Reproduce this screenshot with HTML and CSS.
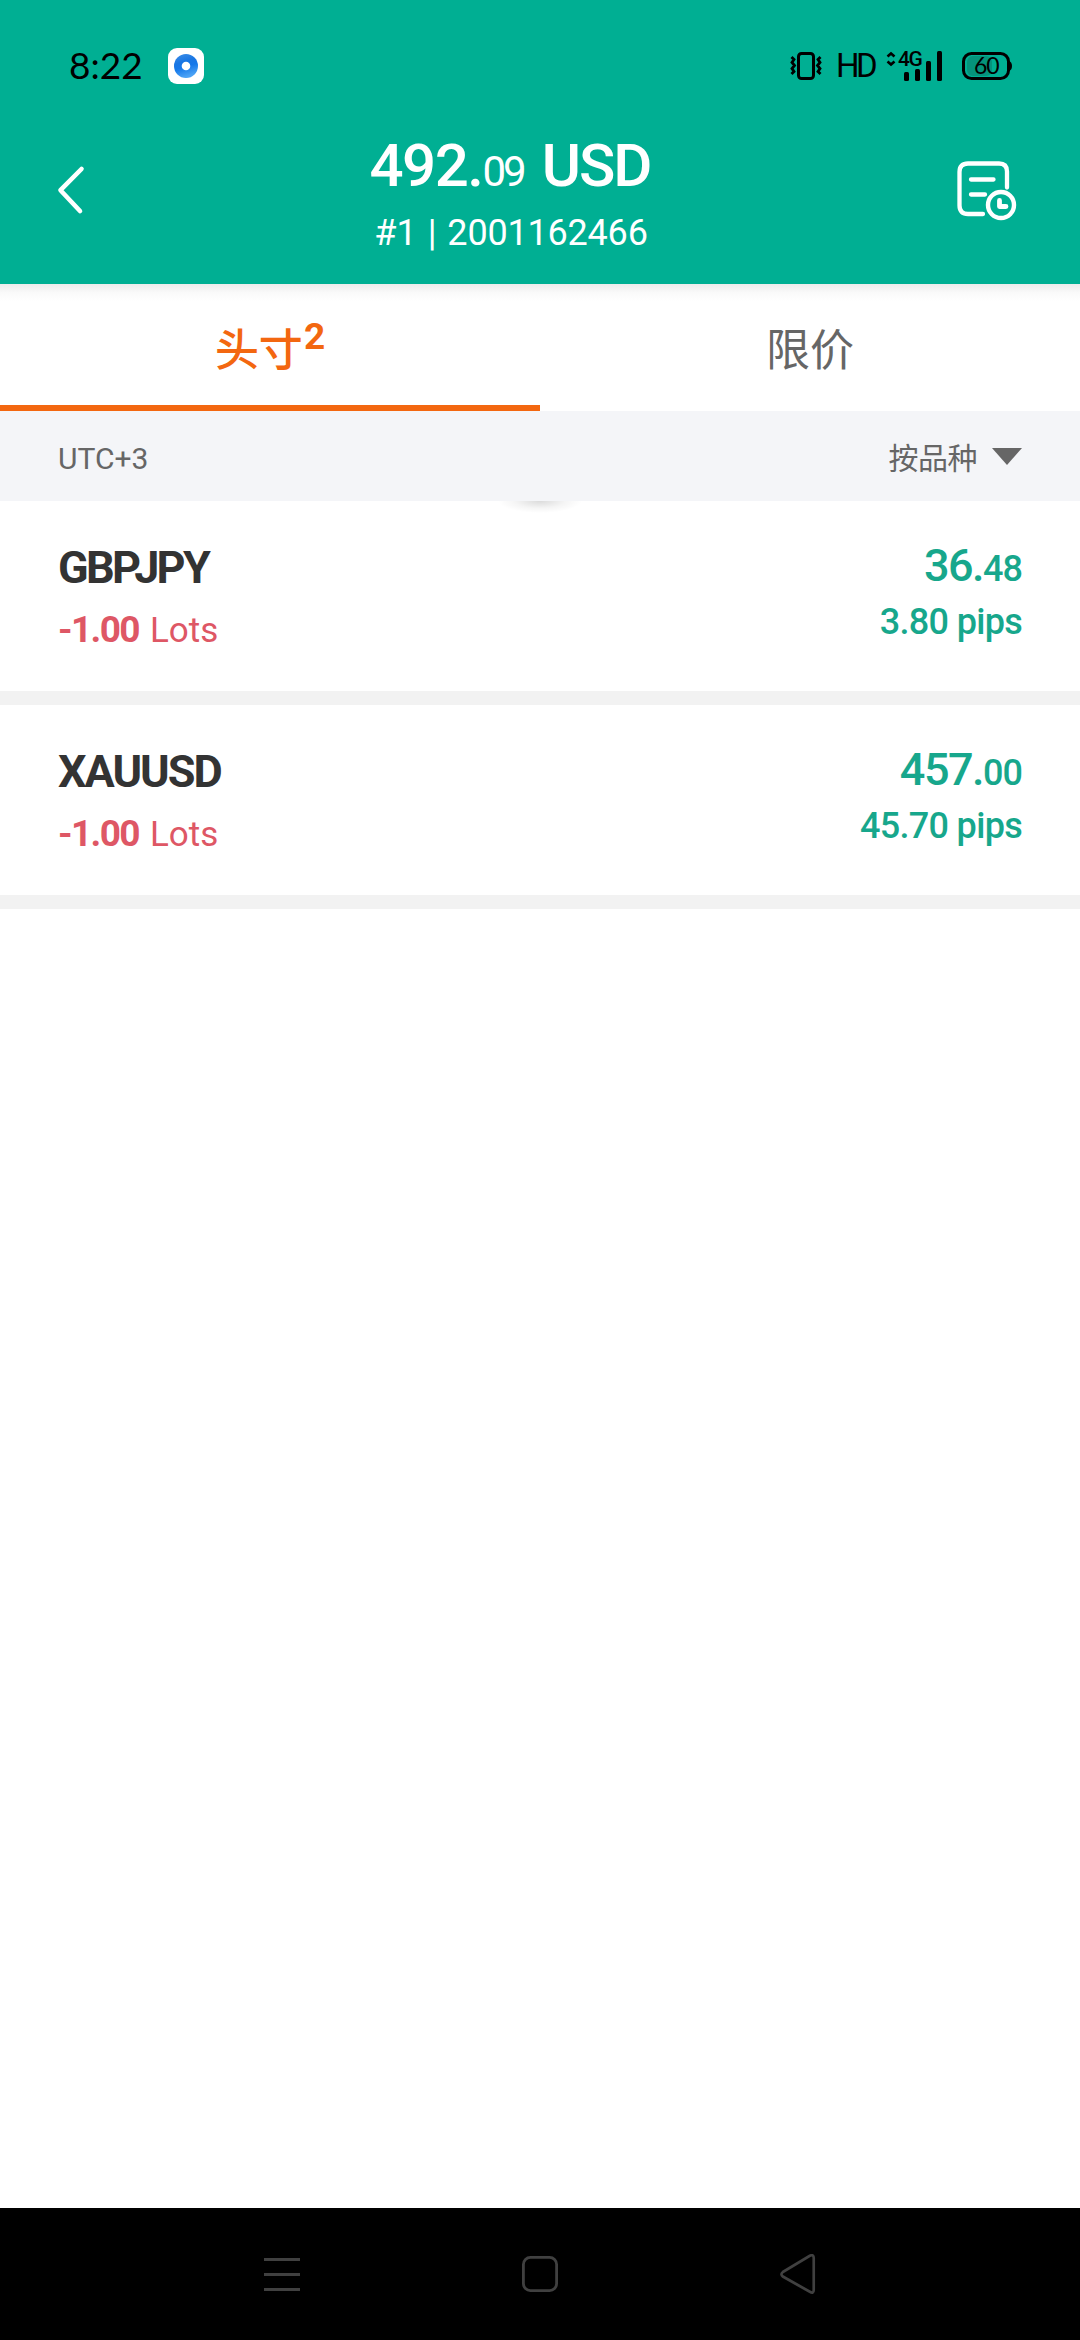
FILE: index.html
```html
<!DOCTYPE html>
<html lang="zh-CN">
<head>
<meta charset="utf-8">
<title>头寸</title>
<link rel="stylesheet" href="styles.css">
</head>
<body>
<div class="screen">
  <header class="header">
    <div class="status">
      <div class="status-left">
        <span class="time">8:22</span>
        <svg class="app-icon" width="36" height="36" viewBox="0 0 36 36">
          <defs><linearGradient id="ring" x1="0" y1="0" x2="0.3" y2="1"><stop offset="0" stop-color="#3f8fe6"/><stop offset=".4" stop-color="#1976e3"/><stop offset=".62" stop-color="#1478ea"/><stop offset="1" stop-color="#4ba2f5"/></linearGradient></defs>
          <rect width="36" height="36" rx="9" fill="#fff"/>
          <circle cx="18" cy="18" r="12" fill="url(#ring)"/>
          <circle cx="18" cy="18" r="4.3" fill="#fff"/>
        </svg>
      </div>
      <div class="status-right">
        <svg width="32" height="30" viewBox="0 0 32 30" fill="none" stroke="#000">
          <rect x="8.5" y="2.5" width="15" height="25" rx="3" stroke-width="3"/>
          <path d="M1.5 6l2.5 2.500L2 11.500l2.500 3-2.500 3 2 3L1.500 23M30.500 6L28 8.500l2 3-2.500 3 2.500 3-2 3 2.500 2.500" stroke-width="2.800"/>
        </svg>
        <span class="hd">HD</span>
        <div class="signal">
          <svg width="57" height="32" viewBox="0 0 57 32">
            <path d="M1.500 6.500L5 3.500l3.500 3M1.500 11.500L5 14.500l3.500-3" fill="none" stroke="#000" stroke-width="2.600"/>
            <rect x="18" y="22" width="5" height="9" rx="1.500"/>
            <rect x="29" y="19" width="5" height="12" rx="1.500"/>
            <rect x="40" y="11" width="5" height="20" rx="1.500"/>
            <rect x="51" y="1" width="5" height="30" rx="1.500"/>
          </svg>
          <span class="net">4G</span>
        </div>
        <div class="battery">
          <svg width="50" height="30" viewBox="0 0 50 30">
            <rect x="5" y="5" width="25" height="20" rx="6" fill="#05937b"/>
            <rect x="1.500" y="2.500" width="45" height="25" rx="8" fill="none" stroke="#000" stroke-width="3"/>
            <path d="M47 10q3 1 3 5t-3 5z"/>
          </svg>
          <span class="level">60</span>
        </div>
      </div>
    </div>
    <div class="bar">
      <svg class="back" width="28" height="50" viewBox="0 0 28 50"><path d="M24.500 4L3.500 25.200 23 46" fill="none" stroke="#fff" stroke-width="4.600" stroke-linecap="round" stroke-linejoin="round"/></svg>
      <div class="title">
        <div class="balance">492.<span class="cents">09</span><span class="currency">USD</span></div>
        <div class="account">#1 | <span>2001162466</span></div>
      </div>
      <svg class="history" width="60" height="60" viewBox="0 0 60 60" fill="none" stroke="#fff" stroke-width="4.300" stroke-linecap="round" stroke-linejoin="round">
        <path d="M26 53H11q-8.500 0-8.500-8.500V11Q2.500 2.500 11 2.500H42Q50 2.500 50 10.500V26.500M14 18.500H36.500M14 33.500H28"/>
        <circle cx="44" cy="44" r="13" stroke-width="4.400"/>
        <path d="M42.500 39.500V45.500H49" stroke-width="4.800"/>
      </svg>
    </div>
  </header>

  <nav class="tabs">
    <div class="tab active"><span>头寸</span><span class="count">2</span></div>
    <div class="tab"><span>限价</span></div>
  </nav>

  <div class="filter">
    <span class="zone">UTC+3</span>
    <div class="sort"><span>按品种</span><svg width="30" height="17" viewBox="0 0 30 17"><path d="M0 0H30L15 17z" fill="#666"/></svg></div>
  </div>

  <main class="list">
    <div class="pull"></div>
    <section class="row">
      <div class="left">
        <div class="symbol jpy">GBPJPY</div>
        <div class="lots"><b>-1.00</b><span>Lots</span></div>
      </div>
      <div class="right">
        <div class="profit">36.<span>48</span></div>
        <div class="pips">3.80 pips</div>
      </div>
    </section>
    <section class="row">
      <div class="left">
        <div class="symbol xau">XAUUSD</div>
        <div class="lots"><b>-1.00</b><span>Lots</span></div>
      </div>
      <div class="right">
        <div class="profit">457.<span>00</span></div>
        <div class="pips">45.70 pips</div>
      </div>
    </section>
  </main>

  <footer class="nav">
    <svg width="36" height="40" viewBox="0 0 36 40" stroke="#404040" stroke-width="3"><path d="M0 5.500H36M0 20.500H36M0 35.500H36"/></svg>
    <svg width="36" height="40" viewBox="0 0 36 40" fill="none" stroke="#404040" stroke-width="2.800"><rect x="1.400" y="3.400" width="33.200" height="33.200" rx="7"/></svg>
    <svg width="36" height="40" viewBox="0 0 38 40" fill="none" stroke="#404040" stroke-width="2.800" preserveAspectRatio="none"><path d="M3 18L31.500 1.800Q35.600 0 35.600 4V36Q35.600 40 31.500 37.800L3 22.500Q0 20.300 3 18z"/></svg>
  </footer>
</div>
</body>
</html>
```
FILE: styles.css
```css
* { box-sizing: border-box; }
body { margin: 0; background: #fff; font-family: Roboto, "Noto Sans CJK SC", sans-serif; }
svg { display: block; flex: none; }

.screen { width: 1080px; height: 2340px; display: flex; flex-direction: column; overflow: hidden; }

.header { height: 284px; background: #00af93; }
.status { height: 132px; padding: 0 68px 0 69px; display: flex; justify-content: space-between; align-items: center; color: #000; }
.status-left, .status-right { display: flex; align-items: center; }
.time { width: 99px; margin-top: -2px; font: 400 37px/44px Lato, sans-serif; letter-spacing: 0; white-space: nowrap; }
.hd { width: 50px; margin-left: 14px; font-size: 33px; line-height: 40px; letter-spacing: -3.500px; }
.signal { position: relative; width: 57px; margin-right: 19px; }
.net { position: absolute; left: 12px; top: -3px; font-size: 21px; line-height: 24px; font-weight: 500; letter-spacing: -1.500px; }
.battery { position: relative; }
.level { position: absolute; left: 12px; top: 1px; font: 400 23px/26px Lato, sans-serif; letter-spacing: -1px; }

.bar { height: 152px; display: grid; grid-template-columns: 200px 620px 1fr; color: #fff; }
.back { margin: 33px 0 0 57px; }
.history { margin: 29px 0 0 137px; }
.title { text-align: center; white-space: nowrap; }
.balance { margin-top: -1px; font-size: 60px; line-height: 70px; font-weight: 500; letter-spacing: -1.500px; }
.cents { font-size: 42px; line-height: 1; font-weight: 400; letter-spacing: -3px; }
.currency { margin-left: 18px; letter-spacing: -2px; }
.account { margin-top: 10px; padding-left: 2px; font-size: 36px; line-height: 44px; word-spacing: 2px; }
.account span { letter-spacing: -.2px; }

.tabs { height: 127px; display: flex; background: linear-gradient(#ececec, #fafafa 9px, #fff 18px); }
.tab { flex: 1; display: flex; justify-content: center; font-size: 44px; line-height: 127px; color: #666; }
.tab.active { color: #f36710; font-weight: 500; border-bottom: 6px solid #f36710; }
.tab span { height: 118px; margin-top: 4px; }
.tab .count { margin: 2px 0 0 1px; font-size: 37px; line-height: 102px; font-weight: 700; }

.filter { height: 90px; padding: 0 58px; display: flex; justify-content: space-between; align-items: center; background: #f4f5f8; color: #666; font-size: 30px; line-height: 40px; }
.zone { padding-top: 6px; letter-spacing: 0; }
.sort { display: flex; align-items: center; gap: 15px; padding-top: 6px; letter-spacing: -.5px; }
.sort svg { margin-top: -6px; }

.list { flex: 1; position: relative; }
.pull { position: absolute; left: 490px; top: 0; width: 100px; height: 16px; background: radial-gradient(ellipse 42px 12px at 50px 0, rgba(0,0,0,.14), rgba(0,0,0,.04) 60%, transparent); }
.row { height: 204px; padding: 35px 58px 0; display: flex; justify-content: space-between; border-bottom: 14px solid #f2f2f2; white-space: nowrap; }
.symbol { margin-top: 2px; font-size: 45px; line-height: 60px; font-weight: 700; color: #333; }
.jpy { letter-spacing: -2.700px; }
.xau { letter-spacing: -2px; }
.lots { margin-top: 7px; font-size: 37px; line-height: 50px; color: #de5765; }
.lots b { letter-spacing: -1.600px; }
.lots span { margin-left: 11px; font-size: 35px; line-height: 1; }
.right { text-align: right; color: #17a78c; font-weight: 500; }
.profit { font-size: 45px; line-height: 60px; letter-spacing: -1.500px; }
.profit span { font-size: 36px; line-height: 1; letter-spacing: -1px; }
.pips { margin-top: 1px; font-size: 36px; line-height: 50px; letter-spacing: -.7px; }

.nav { height: 132px; padding: 0 264px; display: flex; justify-content: space-between; align-items: center; background: #000; }
```
